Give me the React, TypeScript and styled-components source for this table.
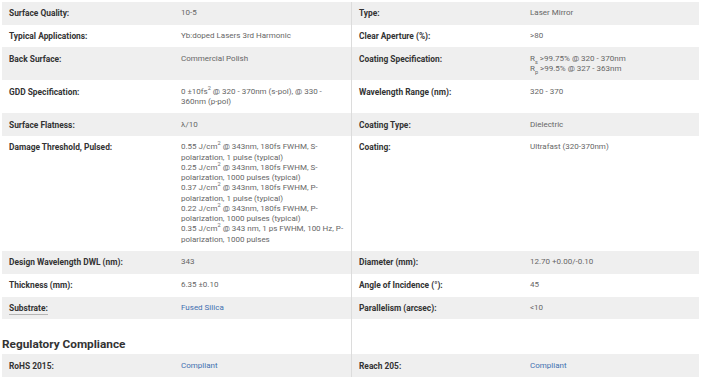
import React from 'react';
import styled, { createGlobalStyle } from 'styled-components';

const GlobalStyle = createGlobalStyle`
  body {
    margin: 0;
    background: #ffffff;
    font-family: Roboto, "Liberation Sans", Arial, sans-serif;
  }
`;

const Page = styled.div`
  padding: 2px 3px 0 2px;
  width: 697px;
`;

const Row = styled.div<{ $shaded?: boolean }>`
  display: grid;
  grid-template-columns: 172px 177px 172px 176px;
  background: ${(p) => (p.$shaded ? '#efefef' : '#ffffff')};
`;

const Cell = styled.div<{ $divider?: boolean }>`
  padding: 6.3px 7px 6.2px;
  line-height: 10.25px;
  border-left: ${(p) => (p.$divider ? '1px solid #dcdcdc' : 'none')};
`;

const Label = styled(Cell)`
  color: #333333;
  font-size: 8.4px;
  font-weight: 700;
`;

const Value = styled(Cell)`
  color: #666666;
  font-size: 8px;
  font-weight: 400;
`;

const Hint = styled.span`
  border-bottom: 1px solid #b5b5b5;
  padding-bottom: 1px;
`;

const Link = styled.a`
  color: #3f6fb0;
  text-decoration: none;
`;

const Sup = styled.sup`
  font-size: 5.6px;
  line-height: 0;
  vertical-align: super;
`;

const Sub = styled.sub`
  font-size: 5.6px;
  line-height: 0;
  vertical-align: sub;
`;

const HeadingRow = styled.div`
  display: grid;
  grid-template-columns: 349px 348px;
  height: 35px;
`;

const Heading = styled.h3`
  margin: 0;
  align-self: end;
  padding-bottom: 3px;
  font-size: 11.8px;
  font-weight: 700;
  color: #333333;
`;

const Spacer = styled.div`
  border-left: 1px solid #dcdcdc;
`;

type Spec = { label: React.ReactNode; value: React.ReactNode };

const pairs: [Spec, Spec][] = [
  [
    { label: 'Surface Quality:', value: '10-5' },
    { label: 'Type:', value: 'Laser Mirror' },
  ],
  [
    { label: 'Typical Applications:', value: 'Yb:doped Lasers 3rd Harmonic' },
    { label: 'Clear Aperture (%):', value: '>80' },
  ],
  [
    { label: 'Back Surface:', value: 'Commercial Polish' },
    {
      label: 'Coating Specification:',
      value: (
        <>
          R<Sub>s</Sub> &gt;99.75% @ 320 - 370nm
          <br />
          R<Sub>p</Sub> &gt;99.5% @ 327 - 363nm
        </>
      ),
    },
  ],
  [
    {
      label: 'GDD Specification:',
      value: (
        <>
          0 ±10fs<Sup>2</Sup> @ 320 - 370nm (s-pol), @ 330 - 360nm (p-pol)
        </>
      ),
    },
    { label: 'Wavelength Range (nm):', value: '320 - 370' },
  ],
  [
    { label: 'Surface Flatness:', value: 'λ/10' },
    { label: 'Coating Type:', value: 'Dielectric' },
  ],
  [
    {
      label: 'Damage Threshold, Pulsed:',
      value: (
        <>
          0.55 J/cm<Sup>2</Sup> @ 343nm, 180fs FWHM, S-polarization, 1 pulse (typical)
          <br />
          0.25 J/cm<Sup>2</Sup> @ 343nm, 180fs FWHM, S-polarization, 1000 pulses (typical)
          <br />
          0.37 J/cm<Sup>2</Sup> @ 343nm, 180fs FWHM, P-polarization, 1 pulse (typical)
          <br />
          0.22 J/cm<Sup>2</Sup> @ 343nm, 180fs FWHM, P-polarization, 1000 pulses (typical)
          <br />
          0.35 J/cm<Sup>2</Sup> @ 343 nm, 1 ps FWHM, 100 Hz, P-polarization, 1000 pulses
        </>
      ),
    },
    { label: 'Coating:', value: 'Ultrafast (320-370nm)' },
  ],
  [
    { label: 'Design Wavelength DWL (nm):', value: '343' },
    { label: 'Diameter (mm):', value: '12.70 +0.00/-0.10' },
  ],
  [
    { label: 'Thickness (mm):', value: '6.35 ±0.10' },
    { label: 'Angle of Incidence (°):', value: '45' },
  ],
  [
    { label: <Hint>Substrate:</Hint>, value: <Link href="#">Fused Silica</Link> },
    { label: 'Parallelism (arcsec):', value: '<10' },
  ],
];

const compliance: [Spec, Spec][] = [
  [
    { label: 'RoHS 2015:', value: <Link href="#">Compliant</Link> },
    { label: 'Reach 205:', value: <Link href="#">Compliant</Link> },
  ],
];

const SpecRows = ({ rows }: { rows: [Spec, Spec][] }) => (
  <>
    {rows.map(([left, right], i) => (
      <Row key={i} $shaded={i % 2 === 0}>
        <Label>{left.label}</Label>
        <Value>{left.value}</Value>
        <Label $divider>{right.label}</Label>
        <Value>{right.value}</Value>
      </Row>
    ))}
  </>
);

const App = () => (
  <Page>
    <GlobalStyle />
    <SpecRows rows={pairs} />
    <HeadingRow>
      <Heading>Regulatory Compliance</Heading>
      <Spacer />
    </HeadingRow>
    <SpecRows rows={compliance} />
  </Page>
);

export default App;
